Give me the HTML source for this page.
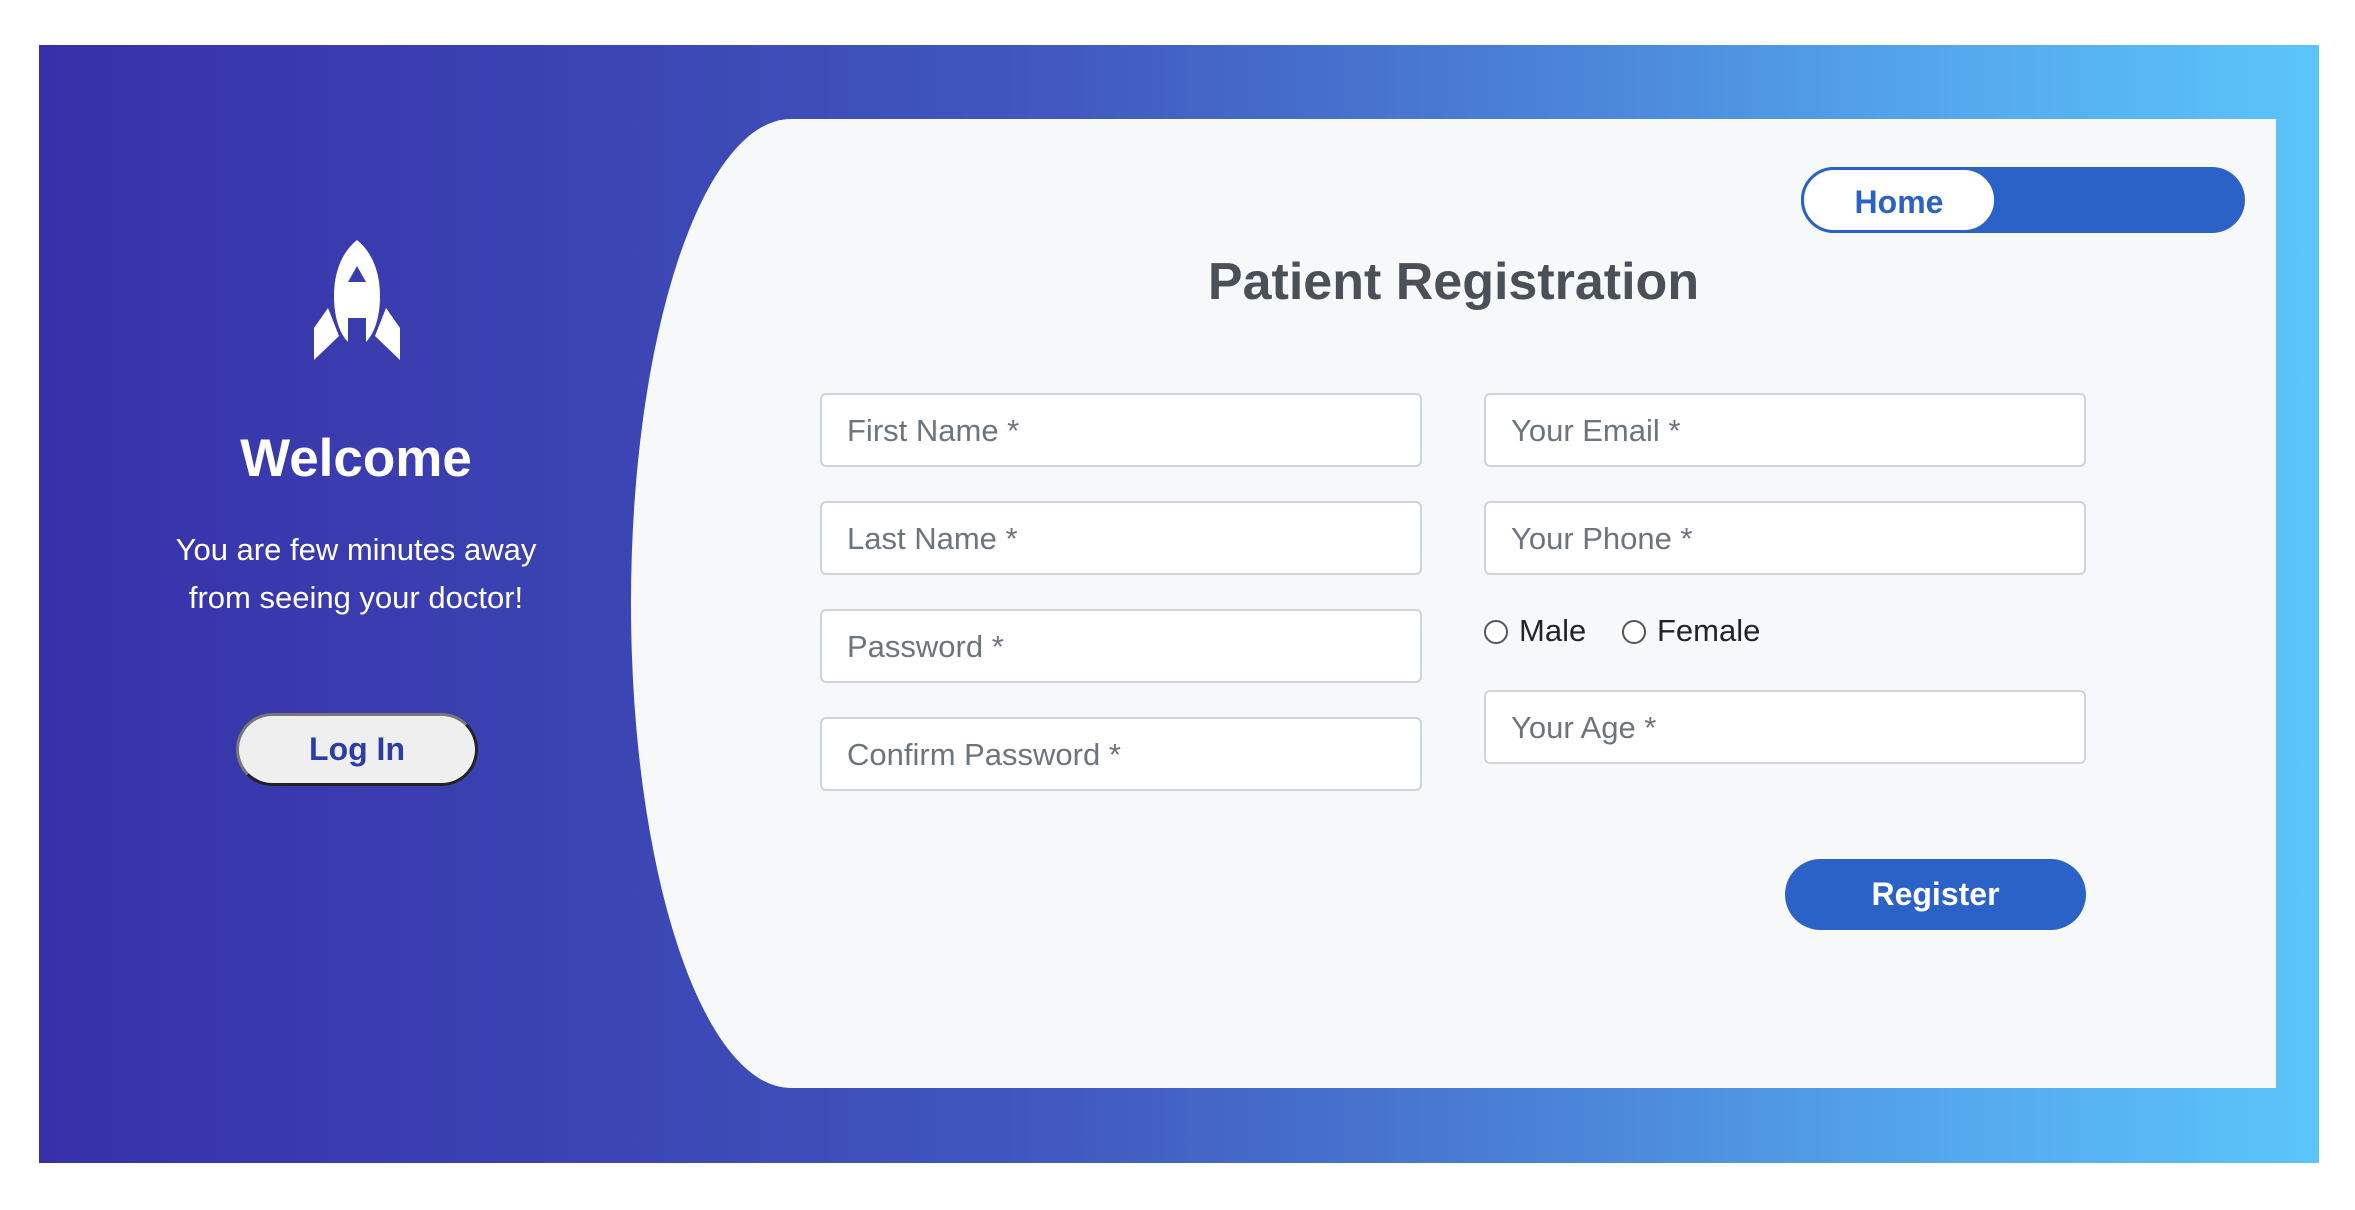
<!DOCTYPE html>
<html><head><meta charset="utf-8"><style>
*{box-sizing:border-box;margin:0;padding:0}
body{width:2355px;height:1210px;background:#fff;position:relative;overflow:hidden;font-family:"Liberation Sans",sans-serif}
.bg{position:absolute;left:39px;top:45px;width:2280px;height:1118px;background:linear-gradient(to right,#3830a9 0%,#3b45b3 25%,#4159c0 45%,#4a80d6 65%,#55aaee 85%,#5bc5fa 100%)}
.card{position:absolute;left:631px;top:119px;width:1645px;height:969px;background:#f7f8fa;border-radius:160px 0 0 160px / 484px 0 0 484px}
.t{position:absolute;white-space:nowrap}
.inp{position:absolute;width:602px;height:74px;background:#fff;border:2px solid #ced4da;border-radius:6px;font-size:31px;color:#6c757d;padding-left:25px;line-height:72px}
.rad{position:absolute;width:24px;height:24px;border:2px solid #555;border-radius:50%;background:#fff}
</style></head><body>
<div class="bg"></div>
<div class="card"></div>
<svg style="position:absolute;left:312px;top:238px" width="90" height="126" viewBox="0 0 90 126">
<path fill="#fff" d="M45 2 C30 14 22 34 22 58 C22 80 28 96 36 104 L36 80 L54 80 L54 104 C62 96 68 80 68 58 C68 34 60 14 45 2 Z M36 44 L45 28 L54 44 Z" fill-rule="evenodd"/>
<path fill="#fff" d="M16 70 L27 98 L2 122 L2 90 Z"/>
<path fill="#fff" d="M74 70 L63 98 L88 122 L88 90 Z"/>
</svg>
<div class="t" style="left:0;width:712px;text-align:center;top:428px;font-size:53px;font-weight:bold;color:#fff">Welcome</div>
<div class="t" style="left:0;width:712px;text-align:center;top:526px;font-size:31px;line-height:48px;color:#fff">You are few minutes away<br>from seeing your doctor!</div>
<div class="t" style="left:236px;top:713px;width:242px;height:73px;background:#efefef;border-radius:37px;border:3px solid;border-color:#777 #222 #222 #777;text-align:center;line-height:67px;font-size:32px;font-weight:bold;color:#2b3ea8">Log In</div>
<div class="t" style="left:1801px;top:167px;width:444px;height:66px;background:#2b62c8;border-radius:33px"></div>
<div class="t" style="left:1801px;top:167px;width:196px;height:66px;background:#fff;border:3px solid #2b62c8;border-radius:33px;text-align:center;line-height:64px;font-size:32px;font-weight:bold;color:#2b62c8">Home</div>
<div class="t" style="left:631px;width:1645px;text-align:center;top:252px;font-size:52px;font-weight:bold;color:#495057">Patient Registration</div>
<div class="inp" style="left:820px;top:393px">First Name *</div>
<div class="inp" style="left:820px;top:501px">Last Name *</div>
<div class="inp" style="left:820px;top:609px">Password *</div>
<div class="inp" style="left:820px;top:717px">Confirm Password *</div>
<div class="inp" style="left:1484px;top:393px">Your Email *</div>
<div class="inp" style="left:1484px;top:501px">Your Phone *</div>
<div class="inp" style="left:1484px;top:690px">Your Age *</div>
<div class="rad" style="left:1484px;top:620px"></div>
<div class="t" style="left:1519px;top:613px;font-size:31px;color:#212529">Male</div>
<div class="rad" style="left:1622px;top:620px"></div>
<div class="t" style="left:1657px;top:613px;font-size:31px;color:#212529">Female</div>
<div class="t" style="left:1785px;top:859px;width:301px;height:71px;background:#2b62c8;border-radius:36px;text-align:center;line-height:71px;font-size:32px;font-weight:bold;color:#fff">Register</div>
</body></html>
